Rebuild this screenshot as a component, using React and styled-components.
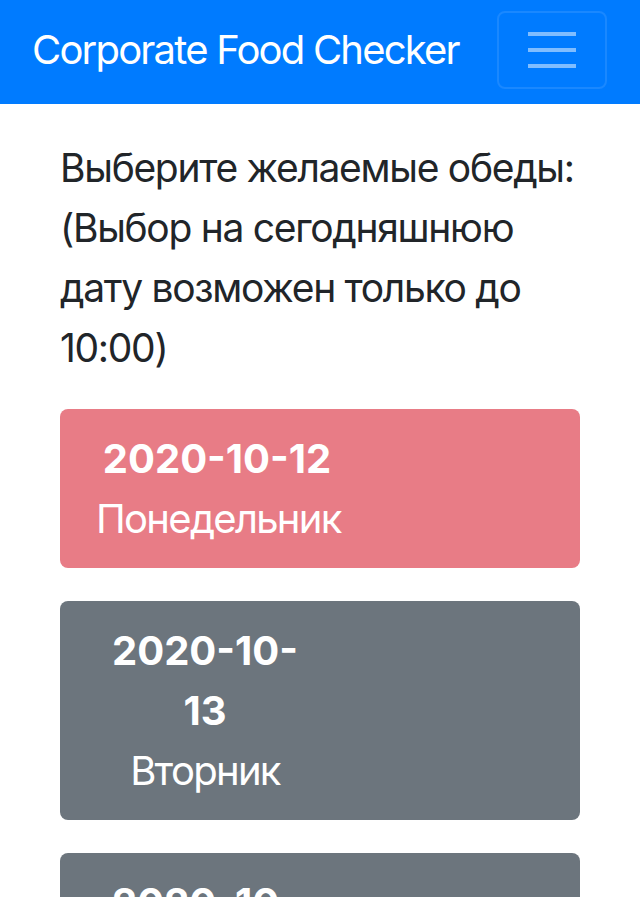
import React from 'react';
import styled, { createGlobalStyle } from 'styled-components';

const GlobalStyle = createGlobalStyle`
  html, body {
    margin: 0;
    padding: 0;
    background: #fff;
  }
  body {
    font-family: Inter, "Liberation Sans", sans-serif;
    color: #212529;
    -webkit-font-smoothing: antialiased;
  }
`;

// Navbar
const NavBar = styled.nav`
  height: 104px;
  background-color: #007bff;
  display: flex;
  align-items: center;
  justify-content: space-between;
  padding: 0 33px 0 32px;
  box-sizing: border-box;
`;

const Brand = styled.a`
  color: #fff;
  font-size: 40px;
  line-height: 60px;
  letter-spacing: -1.8px;
  margin-top: -4px;
  text-decoration: none;
  white-space: nowrap;
`;

const Toggler = styled.button`
  width: 110px;
  height: 78px;
  margin-top: -5px;
  background: transparent;
  border: 2px solid rgba(255, 255, 255, 0.1);
  border-radius: 8px;
  display: flex;
  align-items: center;
  justify-content: center;
  padding: 0;
`;

const Main = styled.main`
  padding: 34px 60px 0;
`;

const Intro = styled.p`
  margin: 0 0 31px;
  font-size: 39px;
  line-height: 60px;
  letter-spacing: -1.3px;
  white-space: nowrap;
`;

const DayCard = styled.div`
  background-color: ${({ tone }) => (tone === 'danger' ? '#e87c86' : '#6c757d')};
  border-radius: 8px;
  color: #fff;
  padding: 20px 0 19px 36px;
  margin-bottom: 33px;
`;

const DayInfo = styled.div`
  width: ${({ w }) => w}px;
  text-align: center;
  font-size: 40px;
  line-height: 60px;
`;

const DayDate = styled.div`
  font-weight: 700;
`;

const DayName = styled.div`
  font-weight: 400;
  letter-spacing: -1.7px;
`;

const days = [
  { date: '2020-10-12', name: 'Понедельник', tone: 'danger', w: 242 },
  { date: '2020-10-13', name: 'Вторник', tone: 'secondary', w: 218 },
  { date: '2020-10-14', name: 'Среда', tone: 'secondary', w: 218 },
];

const App = () => {
  return (
    <>
      <GlobalStyle />
      <NavBar>
        <Brand href="#">Corporate Food Checker</Brand>
        <Toggler aria-label="Toggle navigation">
          <svg width="48" height="40" viewBox="0 0 48 40">
            <path
              d="M0 4h48M0 20h48M0 36h48"
              stroke="rgba(255,255,255,0.5)"
              strokeWidth="4"
              strokeLinecap="round"
            />
          </svg>
        </Toggler>
      </NavBar>
      <Main>
        <Intro>
          Выберите желаемые обеды:
          <br />
          (Выбор на сегодняшнюю
          <br />
          дату возможен только до
          <br />
          10:00)
        </Intro>
        {days.map((d) => (
          <DayCard key={d.date} tone={d.tone}>
            <DayInfo w={d.w}>
              <DayDate>{d.date}</DayDate>
              <DayName>{d.name}</DayName>
            </DayInfo>
          </DayCard>
        ))}
      </Main>
    </>
  );
};

export default App;
